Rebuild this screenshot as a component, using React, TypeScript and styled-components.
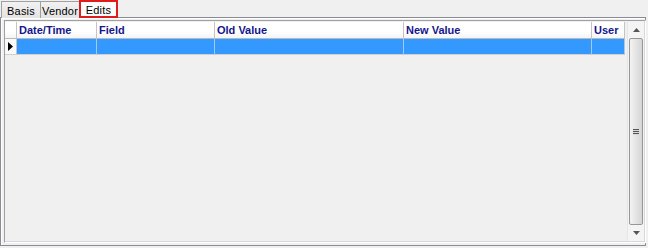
import React from 'react';
import styled, { createGlobalStyle } from 'styled-components';

const GlobalStyle = createGlobalStyle`
  html, body {
    margin: 0;
    padding: 0;
    background: #f0f0f0;
  }
  body {
    font-family: 'Liberation Sans', Arial, sans-serif;
    font-size: 11px;
  }
`;

const Window = styled.div`
  width: 648px;
  height: 248px;
  display: flex;
  flex-direction: column;
  background: #f0f0f0;
  box-sizing: border-box;
`;

const TabStrip = styled.div`
  display: flex;
  height: 18px;
  padding-left: 1px;
  box-sizing: border-box;
`;

const Tab = styled.div<{ active?: boolean; width: number }>`
  width: ${({ width }) => width}px;
  height: ${({ active }) => (active ? 18 : 17)}px;
  margin-top: ${({ active }) => (active ? 0 : 1)}px;
  box-sizing: border-box;
  display: flex;
  align-items: center;
  justify-content: center;
  color: #000;
  border: 1px solid #a0a0a0;
  border-bottom: none;
  margin-right: -1px;
  background: ${({ active }) =>
    active ? '#fcfcfc' : 'linear-gradient(#f2f2f2, #e3e3e3)'};
  outline: ${({ active }) => (active ? '2px solid #e01b1b' : 'none')};
  outline-offset: -2px;
  position: relative;
  z-index: ${({ active }) => (active ? 1 : 0)};
  padding-top: 1px;
  letter-spacing: 0.2px;
`;

const Panel = styled.div`
  flex: 1;
  margin: -1px 2px 2px 0;
  border: 1px solid #898c95;
  box-shadow: inset 1px 1px 0 #fff;
  padding: 2px 2px 2px 3px;
  display: flex;
  box-sizing: border-box;
`;

const Grid = styled.div`
  flex: 1;
  display: flex;
  border: 1px solid #a0a0a0;
  border-right-color: #fff;
  border-bottom-color: #fff;
  box-shadow: inset -1px -1px 0 #d8d8d8;
  background: #f0f0f0;
  padding: 1px 1px 1px 0;
`;

const TableArea = styled.div`
  flex: 1;
  display: flex;
  flex-direction: column;
`;

const Row = styled.div`
  display: flex;
  height: 17px;
`;

const HeaderCell = styled.div<{ width: number }>`
  width: ${({ width }) => width}px;
  box-sizing: border-box;
  height: 17px;
  padding: 2px 0 0 2px;
  font-weight: bold;
  color: #15158c;
  background: linear-gradient(#ffffff 60%, #f4f4f4);
  border-right: 1px solid #c4c4c4;
  border-bottom: 1px solid #b8b8b8;
  white-space: nowrap;
  overflow: hidden;
`;

const RowHeaderCell = styled.div<{ head?: boolean }>`
  width: 12px;
  box-sizing: border-box;
  height: ${({ head }) => (head ? 17 : 16)}px;
  background: ${({ head }) => (head ? 'linear-gradient(#ffffff 60%, #f4f4f4)' : '#fafafa')};
  border-right: 1px solid #c4c4c4;
  border-bottom: 1px solid ${({ head }) => (head ? '#b8b8b8' : '#d0d0d0')};
  display: flex;
  align-items: center;
  justify-content: flex-start;
  padding-left: 3px;
`;

const DataCell = styled.div<{ width: number }>`
  width: ${({ width }) => width}px;
  height: 16px;
  box-sizing: border-box;
  background: #3399ff;
  border-right: 1px solid #a8c8e8;
  border-bottom: 1px solid #d0d0d0;
`;

const ScrollBar = styled.div`
  width: 16px;
  margin-left: 2px;
  display: flex;
  flex-direction: column;
  background: #f4f4f4;
  border-left: 1px solid #e6e6e6;
`;

const ArrowButton = styled.div`
  height: 16px;
  display: flex;
  align-items: center;
  justify-content: center;
`;

const Thumb = styled.div`
  flex: 1;
  margin: 0 1px;
  border: 1px solid #979797;
  border-radius: 2px;
  background: linear-gradient(90deg, #f3f3f3, #e4e4e4 50%, #d6d6d6);
  display: flex;
  align-items: center;
  justify-content: center;
`;

const Grip = styled.div`
  width: 6px;
  height: 6px;
  background: repeating-linear-gradient(#555 0 1px, #d8d8d8 1px 2px);
`;

const columns = [
  { label: 'Date/Time', width: 80 },
  { label: 'Field', width: 118 },
  { label: 'Old Value', width: 189 },
  { label: 'New Value', width: 188 },
  { label: 'User', width: 33 },
];

const tabs = [
  { label: 'Basis', width: 40 },
  { label: 'Vendor', width: 40 },
  { label: 'Edits', width: 39, active: true },
];

export default function App() {
  return (
    <>
      <GlobalStyle />
      <Window>
        <TabStrip>
          {tabs.map((t) => (
            <Tab key={t.label} width={t.width} active={t.active}>
              {t.label}
            </Tab>
          ))}
        </TabStrip>
        <Panel>
          <Grid>
            <TableArea>
              <Row>
                <RowHeaderCell head />
                {columns.map((c) => (
                  <HeaderCell key={c.label} width={c.width}>
                    {c.label}
                  </HeaderCell>
                ))}
              </Row>
              <Row>
                <RowHeaderCell>
                  <svg width="5" height="9" viewBox="0 0 5 9">
                    <path d="M0 0 L5 4.5 L0 9 Z" fill="#000" />
                  </svg>
                </RowHeaderCell>
                {columns.map((c) => (
                  <DataCell key={c.label} width={c.width} />
                ))}
              </Row>
            </TableArea>
            <ScrollBar>
              <ArrowButton>
                <svg width="7" height="4" viewBox="0 0 7 4">
                  <path d="M3.5 0 L7 4 L0 4 Z" fill="#555" />
                </svg>
              </ArrowButton>
              <Thumb>
                <Grip />
              </Thumb>
              <ArrowButton>
                <svg width="7" height="4" viewBox="0 0 7 4">
                  <path d="M0 0 L7 0 L3.5 4 Z" fill="#555" />
                </svg>
              </ArrowButton>
            </ScrollBar>
          </Grid>
        </Panel>
      </Window>
    </>
  );
}
